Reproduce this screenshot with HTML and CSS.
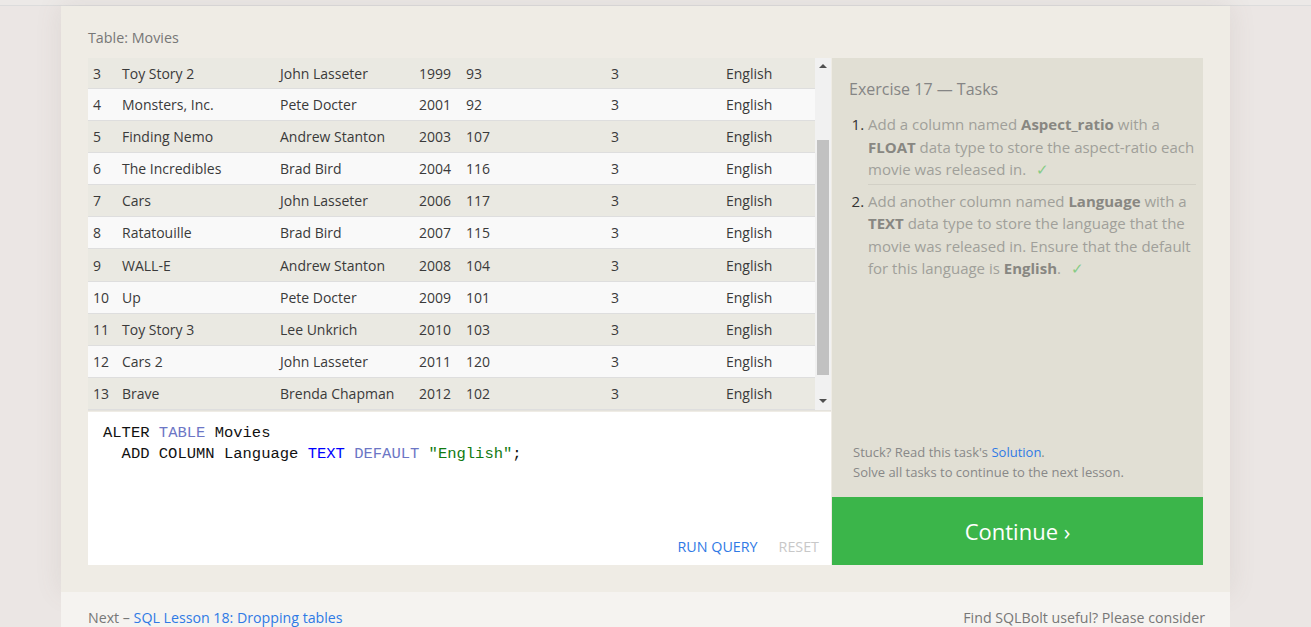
FILE: index.html
```html
<!DOCTYPE html>
<html>
<head>
<meta charset="utf-8">
<link rel="stylesheet" href="styles.css">
</head>
<body>
<div class="topline"></div>
<div class="page">
  <section class="exercise">
    <div class="table-label">Table: Movies</div>
    <div class="workspace">
      <div class="left">
        <div class="table-area">
          <table class="results">
            <colgroup>
              <col class="c1"><col class="c2"><col class="c3"><col class="c4"><col class="c5"><col class="c6"><col class="c7">
            </colgroup>
            <tbody>
              <tr><td>3</td><td>Toy Story 2</td><td>John Lasseter</td><td>1999</td><td>93</td><td>3</td><td>English</td></tr>
              <tr><td>4</td><td>Monsters, Inc.</td><td>Pete Docter</td><td>2001</td><td>92</td><td>3</td><td>English</td></tr>
              <tr><td>5</td><td>Finding Nemo</td><td>Andrew Stanton</td><td>2003</td><td>107</td><td>3</td><td>English</td></tr>
              <tr><td>6</td><td>The Incredibles</td><td>Brad Bird</td><td>2004</td><td>116</td><td>3</td><td>English</td></tr>
              <tr><td>7</td><td>Cars</td><td>John Lasseter</td><td>2006</td><td>117</td><td>3</td><td>English</td></tr>
              <tr><td>8</td><td>Ratatouille</td><td>Brad Bird</td><td>2007</td><td>115</td><td>3</td><td>English</td></tr>
              <tr><td>9</td><td>WALL-E</td><td>Andrew Stanton</td><td>2008</td><td>104</td><td>3</td><td>English</td></tr>
              <tr><td>10</td><td>Up</td><td>Pete Docter</td><td>2009</td><td>101</td><td>3</td><td>English</td></tr>
              <tr><td>11</td><td>Toy Story 3</td><td>Lee Unkrich</td><td>2010</td><td>103</td><td>3</td><td>English</td></tr>
              <tr><td>12</td><td>Cars 2</td><td>John Lasseter</td><td>2011</td><td>120</td><td>3</td><td>English</td></tr>
              <tr><td>13</td><td>Brave</td><td>Brenda Chapman</td><td>2012</td><td>102</td><td>3</td><td>English</td></tr>
            </tbody>
          </table>
          <div class="scrollbar">
            <div class="arrow up"></div>
            <div class="track"><div class="thumb"></div></div>
            <div class="arrow down"></div>
          </div>
        </div>
        <div class="editor">
          <pre class="code"><span class="kw">ALTER</span> <span class="kw2">TABLE</span> Movies
  ADD COLUMN Language <span class="type">TEXT</span> <span class="kw2">DEFAULT</span> <span class="str">"English"</span>;</pre>
          <div class="actions">
            <span class="run">RUN QUERY</span>
            <span class="reset">RESET</span>
          </div>
        </div>
      </div>
      <div class="right">
        <div class="tasks">
          <h3 class="tasks-title">Exercise 17 — Tasks</h3>
          <ol class="task-list">
            <li>Add a column named <b>Aspect_ratio</b> with a <b>FLOAT</b> data type to store the aspect-ratio each movie was released in. <span class="check">✓</span></li>
            <li>Add another column named <b>Language</b> with a <b>TEXT</b> data type to store the language that the movie was released in. Ensure that the default for this language is <b>English</b>. <span class="check">✓</span></li>
          </ol>
          <div class="stuck">
            <div>Stuck? Read this task's <a class="link">Solution</a>.</div>
            <div>Solve all tasks to continue to the next lesson.</div>
          </div>
        </div>
        <div class="continue">Continue ›</div>
      </div>
    </div>
  </section>
</div>
<div class="page footer">
  <div class="next">Next – <a class="link">SQL Lesson 18: Dropping tables</a></div>
  <div class="support">Find SQLBolt useful? Please consider</div>
</div>
</body>
</html>
```

FILE: styles.css
```css
html, body {
  margin: 0;
  padding: 0;
}
body {
  background: #ebe6e4;
  font-family: "Open Sans", "Noto Sans", sans-serif;
  color: #444;
  height: 627px;
  overflow: hidden;
}
.topline {
  height: 5px;
  border-bottom: 1px solid #dcdcdc;
  background: #ece9e7;
}
.page {
  width: 1169px;
  margin-left: 61px;
  box-sizing: border-box;
  padding: 0 27px;
  background: #efece5;
  box-shadow: 0 0 25px rgba(120, 100, 90, 0.12);
}
.exercise {
  padding-top: 22px;
  padding-bottom: 27px;
}
.table-label {
  font-size: 14.3px;
  line-height: 20px;
  color: #777;
  margin-bottom: 10px;
}
.workspace {
  display: flex;
  gap: 1px;
  height: 507px;
}
.left {
  width: 743px;
  display: flex;
  flex-direction: column;
}
.table-area {
  display: flex;
  height: 352px;
  border-bottom: 1px solid #e4e2dc;
}
.results {
  width: 727px;
  border-collapse: collapse;
  table-layout: fixed;
  font-size: 14px;
  line-height: 19px;
  color: #3a3a3a;
}
.results col.c1 { width: 29px; }
.results col.c2 { width: 158px; }
.results col.c3 { width: 139px; }
.results col.c4 { width: 47px; }
.results col.c5 { width: 145px; }
.results col.c6 { width: 115px; }
.results col.c7 { width: 94px; }
.results td {
  height: 31px;
  padding: 0 0 0 5px;
  border-bottom: 1px solid #dedede;
  white-space: nowrap;
  overflow: hidden;
  vertical-align: middle;
}
.results tr:nth-child(odd) td { background: #eae9e2; }
.results tr:nth-child(even) td { background: #f9f9f9; }
.results tr:first-child td { height: 30px; }
.scrollbar {
  width: 16px;
  background: #f1f1f1;
  display: flex;
  flex-direction: column;
}
.arrow {
  height: 17px;
  position: relative;
}
.arrow::after {
  content: "";
  position: absolute;
  left: 4px;
  width: 0;
  height: 0;
  border-left: 4px solid transparent;
  border-right: 4px solid transparent;
}
.arrow.up::after { top: 6px; border-bottom: 4px solid #505050; }
.arrow.down::after { top: 6px; border-top: 4px solid #505050; }
.track {
  flex: 1;
  padding: 65px 2px 0 2px;
}
.thumb {
  height: 235px;
  background: #c1c1c1;
}
.editor {
  flex: 1;
  background: #fff;
  display: flex;
  flex-direction: column;
  margin-top: 1px;
}
.code {
  margin: 0;
  padding: 11px 15px 0 15px;
  font-family: "Liberation Mono", "DejaVu Sans Mono", monospace;
  font-size: 15.5px;
  line-height: 20.5px;
  color: #111;
}
.kw2 { color: #6c76c5; }
.type { color: #0000ff; }
.str { color: #117a11; }
.actions {
  margin-top: auto;
  display: flex;
  justify-content: flex-end;
  gap: 21px;
  padding: 0 12px 8px 0;
  font-size: 14.3px;
  line-height: 20px;
}
.run { color: #2f7ae5; }
.reset { color: #c8c8c8; }
.right {
  width: 371px;
  display: flex;
  flex-direction: column;
}
.tasks {
  flex: 1;
  background: #e1dfd4;
  display: flex;
  flex-direction: column;
  padding: 20px 7px 15px 17px;
}
.tasks-title {
  margin: 0;
  font-size: 16px;
  font-weight: normal;
  line-height: 22px;
  color: #858585;
}
.task-list {
  margin: 13px 0 0 0;
  padding-left: 19px;
  font-size: 15px;
  line-height: 22.5px;
  color: #a09f9a;
}
.task-list li::marker { color: #333; }
.task-list b { color: #888782; }
.task-list li + li {
  border-top: 1px solid #d2d0c6;
  margin-top: 3px;
  padding-top: 5px;
}
.check {
  color: #86cc86;
  margin-left: 6px;
}
.stuck {
  margin-top: auto;
  padding-left: 4px;
  font-size: 13px;
  line-height: 20px;
  color: #888;
}
.link {
  color: #2f7ae5;
  text-decoration: none;
}
.continue {
  height: 68px;
  background: #3bb54a;
  color: #fff;
  font-size: 22px;
  display: flex;
  align-items: center;
  justify-content: center;
}
.footer {
  background: #f5f3f0;
  display: flex;
  justify-content: space-between;
  padding: 16px 25px 0 27px;
  height: 60px;
  font-size: 14.2px;
  line-height: 20px;
  color: #777;
  box-shadow: none;
}
```
